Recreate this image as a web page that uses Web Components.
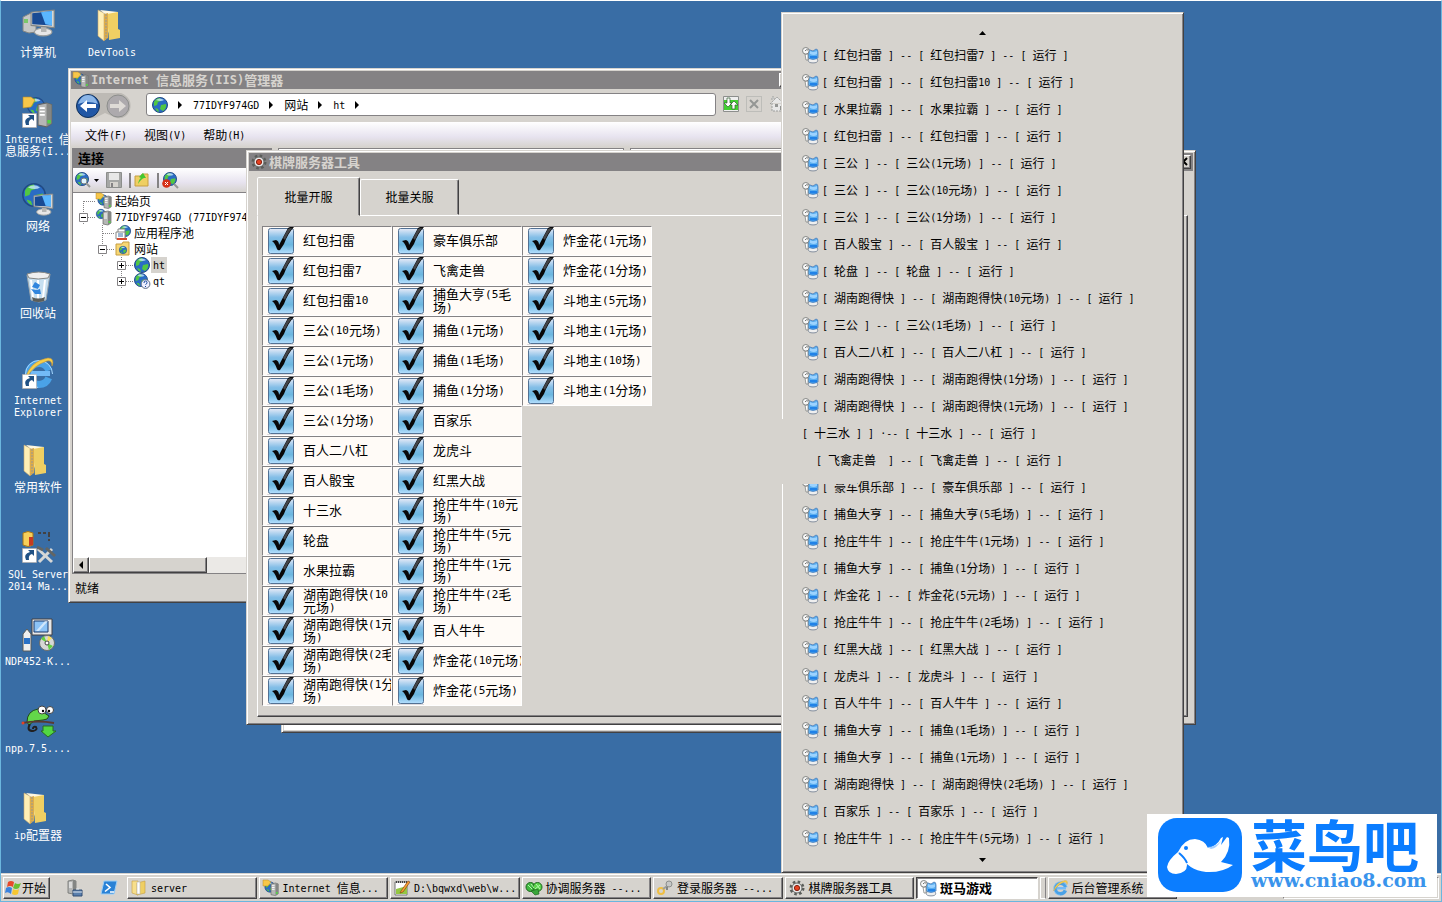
<!DOCTYPE html>
<html lang="zh-CN">
<head>
<meta charset="utf-8">
<title>Desktop</title>
<style>
  html, body {
    height: 100%;
    margin: 0;
    overflow: hidden;
  }
</style>
</head>
<body>
<lp-desktop></lp-desktop>

<script>
// Half-width characters are set smaller, so two of them take one full-width cell.
const t = text => text.replace(/[\x20-\x7e·]+/g, run => `<span class="en">${run}</span>`)

const base = `
  <style>
    :host {
      --face: #d6d3ce;
      --shade: #848284;
      --dark: #424142;
      box-sizing: border-box;
      font: 12px/12px 'Noto Sans CJK SC', sans-serif;
      color: #000;
    }
    *, ::before, ::after { box-sizing: border-box; }
    .en {
      font-family: 'DejaVu Sans Mono', monospace;
      font-size: 10px;
      line-height: 0;
      vertical-align: 1px;
      white-space: pre-wrap;
    }
    button {
      margin: 0;
      padding: 0;
      border: 0;
      background: none;
      font: inherit;
      color: inherit;
    }
    ul { margin: 0; padding: 0; list-style: none; }
    .raised {
      border: 1px solid;
      border-color: #fff var(--dark) var(--dark) #fff;
      box-shadow: inset -1px -1px var(--shade);
      background: var(--face);
    }
  </style>
`

const globe = (x, y, r) => `
  <g transform="translate(${x} ${y}) scale(${r / 8})">
    <circle r="7.5" fill="#2a6cc4" stroke="#214a84" />
    <path d="M-6-3q2-4 6-4l1 3-3 1-1 3-3 1zM1 0l5-1q1 4-3 7l-3-2zM-5 3l3 1 1 3q-3-1-4-4z" fill="#52c742" />
    <path d="M-4-5q4-3 8 0-3 2-8 0z" fill="#c6e7ff" opacity=".8" />
  </g>`
const server = (x, y, s) => `
  <g transform="translate(${x} ${y}) scale(${s})">
    <path d="M0 1l5-1 3 1v11l-3 2-5-1z" fill="#b5b6b5" stroke="#636563" stroke-width=".7" />
    <path d="M5 0v14l3-2V1z" fill="#848684" />
    <path d="M1 3h3M1 5h3M1 7h3" stroke="#fff" />
    <path d="M5.500 10h2v2h-2z" fill="#52d742" />
  </g>`
const shortcut = `
  <path d="M.5 17.500h14v14H.500z" fill="#fff" stroke="#b5a69c" stroke-dasharray="1 1" />
  <path d="M4 29q-3-6 4-8l-2-2h6v6l-2-2q-4 1-3 6z" fill="#215184" />`
const folder = `
  <path d="M2 1l6 3v28l-6-5z" fill="#ffefb5" stroke="#c6a66b" stroke-width=".6" />
  <path d="M4 1l18 2v18l-9 1-4 9V5z" fill="#fff7de" />
  <path d="M11 5l11-2v17l2 1v8l-11 2z" fill="#efcf63" />
  <path d="M8 5l4-1v25l-4 3z" fill="#dead4a" />
  <path d="M10 5v25" stroke="#949694" stroke-dasharray="2 1" />`
const gear = `
  <circle cx="8" cy="8" r="6" fill="none" stroke="#5a5d5a" stroke-width="3" stroke-dasharray="2.400 2.300" />
  <circle cx="8" cy="8" r="5" fill="#e7e7e7" stroke="#636563" />
  <circle cx="8" cy="8" r="2.600" fill="#e74121" stroke="#842010" />`
const ie = `
  <circle cx="17" cy="17" r="10.500" fill="none" stroke="#4aa2e7" stroke-width="7" stroke-dasharray="58 8" stroke-dashoffset="-4" />
  <path d="M9 14h19v5H9z" fill="#73baf7" />
  <circle cx="17" cy="17" r="13.500" fill="none" stroke="#a5d7ff" stroke-width="1" stroke-dasharray="64 22" stroke-dashoffset="-22" />
  <path d="M3 22Q8 4 26 1q7 0 4 8 0-6-5-5Q12 8 5 20z" fill="#f7cf4a" stroke="#c6963a" stroke-width=".6" />`
const monitor = (x, y, s) => `
  <g transform="translate(${x} ${y}) scale(${s})">
    <ellipse cx="12" cy="20" rx="8" ry="3.500" fill="#e7e7e7" stroke="#9c9e9c" />
    <path d="M10 15h5v5h-5z" fill="#b5b6b5" />
    <path d="M1 2l21-2v16l-21-2z" fill="#d6d7d6" stroke="#848684" />
    <path d="M2 3l18-2v13L2 13z" fill="#184a94" />
    <path d="M10 2l10-1v13l-6-1z" fill="#5ab6ff" />
  </g>`

const icons = {
  computer: [32, `<path d="M1 8l8-4 5 2v17l-7 1-6-2z" fill="#c6c7c6" stroke="#848684" /><path d="M2 10h4v4H2z" fill="#7bc76b" />${monitor(8, 1, 1.1)}`],
  iisApp: [32, `${globe(14, 10, 9)}${server(16, 7, 1.7)}<path d="M1 1h8l4 3-4 7-8 1z" fill="#f7c74a" stroke="#b58a29" stroke-width=".6" />${shortcut}`],
  network: [32, `${globe(12, 12, 12)}${monitor(11, 11, .9)}`],
  bin: [32, `<path d="M5 5l23-1-4 26-7 2-8-2z" fill="#c6dff0" stroke="#9ca6ad" />
    <path d="M5 4q12-4 23 0l-2 4q-10 2-19 0z" fill="#efefef" stroke="#848684" />
    <path d="M9 10l2 18M23 10l-2 18M16 10v20" stroke="#fff" stroke-width="2" />
    <path d="M13 12l5 3-2 4-6-2zM9 19l4 5h6l-1-5-4 1z" fill="#3186de" /><path d="M10 27q6 3 13 0l-1 4q-6 2-11 0z" fill="#5a5d5a" />`],
  ie: [32, ie],
  ieLink: [32, ie + shortcut],
  folder: [32, folder],
  sql: [32, `<path d="M1 2q5-3 10 0v12q-5 3-10 0z" fill="#f7cf5a" stroke="#a57518" /><path d="M7 6h4v8l-4 1z" fill="#c63a21" />
    <path d="M16 2h12M27 3v7" stroke="#424142" stroke-dasharray="3 2" stroke-width="2" />
    <path d="M16 18l14 13M30 18L17 31" stroke="#d6d7d6" stroke-width="3" /><path d="M15 16l6 3M24 17l9 8" stroke="#636563" stroke-width="3" />${shortcut}`],
  setup: [32, `<path d="M10 1h20v16H10z" fill="#e7e7e7" stroke="#424142" /><path d="M12 3h14v11H12z" fill="#8cc3f7" stroke="#18396b" /><path d="M14 13L23 3h3L17 13z" fill="#fff" opacity=".6" />
    <path d="M1 16l4-5 4 5v17H1z" fill="#efefef" stroke="#5a5d5a" /><path d="M2 20h6v6H2z" fill="#2971c6" />
    <circle cx="25" cy="25" r="7.500" fill="#d6d7d6" stroke="#6b6d6b" /><path d="M25 25l-6-4 3-3zM25 25l6 3-4 4z" fill="#63cf42" /><path d="M25 25l1-7 4 2z" fill="#f7df5a" /><circle cx="25" cy="25" r="2" fill="#fff" stroke="#424142" />`],
  npp: [32, `<path d="M5 17Q5 6 16 4l11 7q-1 4-6 4l-9 1-5 4z" fill="#63d74a" stroke="#214a18" />
    <path d="M0 18q16-3 32 0" fill="none" stroke="#5a3931" stroke-width="2" /><circle cx="1" cy="18" r="1.500" fill="#e74121" />
    <path d="M8 19q-4 7 3 7 5-1 3-4-3-1-3 2" fill="none" stroke="#212021" stroke-width="2" />
    <circle cx="20" cy="5" r="4" fill="#fff" stroke="#424142" /><circle cx="28" cy="5" r="3.500" fill="#fff" stroke="#424142" /><circle cx="21" cy="6" r="1.200" /><circle cx="27" cy="6" r="1.200" />
    <path d="M21 21h10v5h3l-8 6-7-6h2z" fill="#52d742" stroke="#296b21" />`],
  iis: [16, `${globe(7, 7, 5.5)}<path d="M0 0h5l3 2-3 4-5 0z" fill="#f7c74a" stroke="#b58a29" stroke-width=".5" />${server(8, 3, .9)}`],
  serverGlobe: [16, `${globe(5, 5, 5)}${server(7, 2, 1)}`],
  globe: [16, globe(8, 8, 8)],
  globeFind: [16, `${globe(7, 7, 7)}<circle cx="9" cy="9" r="3" fill="#dff3ff" stroke="#73797b" /><path d="M11 11l4 4" stroke="#949694" stroke-width="2" />`],
  globeStop: [16, `${globe(8, 7, 7)}<path d="M12 12l4 4" stroke="#949694" stroke-width="2" /><circle cx="4.500" cy="11.500" r="4.300" fill="#d63018" /><path d="M3 10l3 3M6 10l-3 3" stroke="#fff" />`],
  globeHelp: [16, `${globe(7, 7, 7)}<circle cx="11.500" cy="11" r="4.400" fill="#efefff" stroke="#5a6984" /><path d="M10 10q0-2 1.500-2t1.500 1.500-1.500 2M11.500 13v1" fill="none" stroke="#10459c" />`],
  save: [16, `<path d="M.5.500h15v15H.500z" fill="#a5a6a5" stroke="#8c8e8c" /><path d="M3 1h10v7H3z" fill="#e7e7e7" /><path d="M4 10h8v5H4z" fill="#d6d3ce" /><path d="M5 11h2v4H5z" fill="#848284" />`],
  folderUp: [16, `<path d="M1 4h6l1-2h6v12H1z" fill="#efcf63" stroke="#c69e42" /><path d="M4 12q1-5 3-6L5 5l4-4 3 5h-2q-3 1-6 6z" fill="#42c731" />`],
  pool: [16, `${globe(10, 6, 6)}<path d="M3 4h7v9H3z" fill="#fff" stroke="#848684" /><path d="M1 7h9v7H1z" fill="#fff" stroke="#848684" /><path d="M2 13h10v2H2z" fill="#d64931" /><path d="M3 9h5M3 11h5" stroke="#3a6ea5" />`],
  siteFolder: [16, `<path d="M1 3h6l1-2h6v13H1z" fill="#f7d773" stroke="#c69e42" />${globe(8, 9, 4)}`],
  gear: [16, gear],
  refresh: [16, `<path d="M.5.500h15v15H.500z" fill="#efefef" stroke="#8c8e8c" /><path d="M1 4h14v10H1z" fill="#42cf31" /><path d="M7 2H4v5H1l4 4 4-4H7zM9 13h3V9h3l-4-4-4 4h2z" fill="#fff" stroke="#315d31" stroke-width=".7" />`],
  stop: [16, `<path d="M.5.500h15v15H.500z" fill="none" stroke="#a5a6a5" stroke-dasharray="1 1" /><path d="M4 4l8 8M12 4l-8 8" stroke="#949694" stroke-width="2" />`],
  home: [16, `<path d="M1 8l7-7 7 7M3 7v8h11V7M3 4V1h2v2" fill="#e7e7e7" stroke="#9c9e9c" stroke-dasharray="2 1" /><path d="M6 8h3v3H6zM11 10h2v4h-2z" fill="#949694" />`],
  flag: [16, `<path d="M3 2q3-2 6 0L8 7Q5 5 2 7z" fill="#e7492a" /><path d="M10 3q3 2 6 0l-2 5q-3 2-6 0z" fill="#6bbf31" /><path d="M1 8q3-2 6 0l-1 6q-3-3-6-1z" fill="#3a82de" /><path d="M8 9q3 2 6 0l-1 5q-3 2-6 0z" fill="#f7c731" />`],
  tools: [16, `${server(1, 0, 1)}<path d="M6 10h9v6H6z" fill="#5a7fad" stroke="#314d73" /><path d="M9 9h3M6 12h9" stroke="#dfe7ef" />`],
  shell: [16, `<path d="M3 1h13l-3 13H0z" fill="#2982d6" stroke="#9ccff7" /><path d="M5 4l4 3.500-5 4M9 12h4" fill="none" stroke="#fff" stroke-width="1.600" />`],
  zip: [16, `<path d="M1 1h6v14l-6-2z" fill="#f7df8c" stroke="#c69e42" stroke-width=".6" /><path d="M6 3l8-2v12l-8 2z" fill="#efcf63" stroke="#c69e42" stroke-width=".6" /><path d="M6 2h3v12H6z" fill="#fff" stroke="#b5b6b5" stroke-width=".6" />`],
  notes: [16, `<path d="M1 2h12v13H1z" fill="#fff" stroke="#737573" /><path d="M2 9l11-3v8H2z" fill="#94c742" /><path d="M2 2h11" stroke="#424142" stroke-dasharray="1 1" stroke-width="2" /><path d="M7 11l7-10 2 1-7 10-3 1z" fill="#f79e31" stroke="#7b3910" stroke-width=".6" />`],
  sync: [16, `<circle cx="4.500" cy="7" r="4.500" fill="#42ba42" stroke="#1f651f" /><circle cx="11.500" cy="7" r="4.500" fill="#5ad34a" stroke="#1f651f" /><path d="M2 5l4 4M5 4l3 4M10 4l4 5M9 9l5-4" stroke="#b5f7ad" /><path d="M5 11l7-2 1 5-4 1z" fill="#3aa63a" stroke="#1f651f" stroke-width=".7" />`],
  key: [16, `<circle cx="4" cy="11" r="3" fill="none" stroke="#efbe42" stroke-width="2" /><path d="M6 9l7-5" stroke="#9c9e9c" stroke-width="2" /><circle cx="12" cy="4" r="3" fill="#c6c7c6" stroke="#8c8e8c" /><path d="M10 7v3" stroke="#848684" stroke-width="2" />`],
  users: [16, `<ellipse cx="11" cy="13.500" rx="4.700" ry="2.400" fill="#efefef" stroke="#6b798c" stroke-width=".8" />
    <path d="M6 4q0-2 2-1l3 1 3-2q2 0 2 3v6q-5 3-10 0z" fill="#5aaef0" stroke="#527db5" stroke-width=".8" />
    <path d="M8 4q3 2 7 0v3q-3 2-7 0z" fill="#9cd3ff" /><path d="M8 9h7v2q-3 1-7 0z" fill="#2182e7" />
    <path d="M3 7h3v6H4z" fill="#fff" stroke="#848684" stroke-width=".8" />
    <circle cx="3.800" cy="3.800" r="3.300" fill="#f7f7f7" stroke="#848684" /><path d="M3 4q1-2 3-1" fill="none" stroke="#737573" />`],
  tick: [28, `<defs><linearGradient id="g" x2="0" y2="1"><stop stop-color="#e7ebf7" /><stop offset=".35" stop-color="#84bee7" /><stop offset=".65" stop-color="#6bb6de" /><stop offset="1" stop-color="#b5dfff" /></linearGradient></defs>
    <path d="M0 27.500h27" stroke="#dedbde" /><rect x="1.500" y="1.500" width="25" height="25" rx="2" fill="url(#g)" stroke="#527194" />
    <path d="M5 14l4-1q3 1 3 5L21 1q3-2 6-1-6 6-10 17l-4 6q-2 1-3-1-2-6-5-8z" fill="#080808" /><path d="M21 2q2-1 4-1-4 5-7 12l-2-2z" fill="#42454a" />`],
  dove: [84, `<rect width="84" height="74" rx="19" fill="#0b7dff" />
    <path d="M20 34q6-13 17-13 10 1 13 9 9-2 13-10l2-1-2 8 6-8 2 1q2 14-8 24l12 3q-11 8-27 7-18-2-26-17z" fill="#fff" />
    <path d="M49 29q9 0 14-6-4 7-10 8z" fill="#a5cfff" /><circle cx="28" cy="30" r="2" fill="#0b7dff" />
    <path d="M20 34q-10 8-11 15 1 7 9 7 11-1 11-9 0-6-7-11z" fill="#fff" /><path d="M21 35q6 5 8 10" fill="none" stroke="#0b7dff" stroke-width="2" />`],
}

class Icon extends HTMLElement {
  constructor() {
    super()
    this.attachShadow({ mode: 'open' })
  }

  connectedCallback() {
    const [size, shapes] = icons[this.getAttribute('name')]
    const width = this.getAttribute('size') || size
    this.shadowRoot.innerHTML = `
      <style>
        :host { display: block; flex: none; }
        svg { display: block; overflow: visible; }
      </style>
      <svg width="${width}" height="${width}" viewBox="0 0 ${size} ${size}" aria-hidden="true">${shapes}</svg>
    `
  }
}
customElements.define('lp-icon', Icon)

class Shortcut extends HTMLElement {
  constructor() {
    super()
    this.attachShadow({ mode: 'open' })
  }

  connectedCallback() {
    this.shadowRoot.innerHTML = `
      ${base}
      <style>
        :host { display: block; }
        a {
          display: flex;
          flex-direction: column;
          align-items: center;
          gap: 5px;
          color: #fff;
          text-align: center;
          text-decoration: none;
        }
        span.label { width: 68px; }
      </style>
      <a href="#"><lp-icon name="${this.getAttribute('icon')}"></lp-icon><span class="label">${t(this.getAttribute('label'))}</span></a>
    `
  }
}
customElements.define('lp-shortcut', Shortcut)

class AppWindow extends HTMLElement {
  constructor() {
    super()
    this.attachShadow({ mode: 'open' })
  }

  connectedCallback() {
    const icon = this.getAttribute('icon')
    this.shadowRoot.innerHTML = `
      ${base}
      <style>
        :host {
          display: flex;
          flex-direction: column;
          padding: 2px;
          border: 1px solid;
          border-color: var(--face) var(--dark) var(--dark) var(--face);
          box-shadow: inset 1px 1px #fff, inset -1px -1px var(--shade);
          background: var(--face);
        }
        header {
          display: flex;
          align-items: center;
          flex: none;
          gap: 2px;
          height: 18px;
          padding: 0 2px;
          background: var(--shade);
          color: var(--face);
          font-size: 13px;
          font-weight: bold;
        }
        header .en { font-size: 12px; }
        button {
          width: 14px;
          height: 14px;
          margin-left: auto;
          color: #000;
        }
        button svg { display: block; }
        ::slotted(*) { flex: 1; min-height: 0; }
      </style>
      ${icon ? `<header>
        <lp-icon name="${icon}"></lp-icon>
        <span>${t(this.getAttribute('caption'))}</span>
        <button class="raised" aria-label="关闭"><svg width="12" height="12"><path d="M2 2l7 7M9 2l-7 7" stroke="#000" stroke-width="2" /></svg></button>
      </header>` : ''}
      <slot></slot>
    `
  }
}
customElements.define('lp-window', AppWindow)

class SiteManager extends HTMLElement {
  constructor() {
    super()
    this.attachShadow({ mode: 'open' })
    const row = (level, mark, icon, label, selected) => `
      <li style="--level: ${level}">
        <span class="twist">${mark ? `<svg width="9" height="9"><path d="M.5.500h8v8h-8z" fill="#fff" stroke="#848284" /><path d="${mark === '+' ? 'M2 4.500h5M4.500 2v5' : 'M2 4.500h5'}" stroke="#000" /></svg>` : ''}</span>
        <lp-icon name="${icon}"></lp-icon>
        <span class="name${selected ? ' selected' : ''}">${t(label)}</span>
      </li>`
    const arrow = '<svg width="5" height="8"><path d="M0 0l4 4-4 4z" /></svg>'
    this.shadowRoot.innerHTML = `
      ${base}
      <style>
        :host { display: flex; flex-direction: column; }
        .nav {
          display: flex;
          align-items: center;
          flex: none;
          gap: 7px;
          height: 33px;
          padding: 0 4px;
        }
        .nav > svg { flex: none; }
        .nav button { margin-bottom: 4px; }
        .address {
          display: flex;
          align-items: center;
          flex: 0 0 570px;
          gap: 10px;
          height: 23px;
          margin: 0 0 2px 6px;
          padding-left: 5px;
          border: 1px solid var(--shade);
          border-radius: 3px;
          background: #fff;
        }
        .menu, .tools {
          display: flex;
          align-items: center;
          flex: none;
          background: linear-gradient(#fff, #e7e3ef 60%, var(--face));
        }
        .menu { gap: 17px; height: 25px; padding-left: 14px; }
        .panes { display: flex; flex: 1; gap: 6px; min-height: 0; padding: 1px 1px 0; }
        .pane { border: 1px solid var(--shade); background: #fff; }
        .pane.mid { width: 346px; }
        .pane.end { flex: 1; }
        .side {
          display: flex;
          flex-direction: column;
          width: 200px;
          border-left: 1px solid var(--shade);
          border-bottom: 1px solid var(--shade);
          background: #fff;
        }
        h2 {
          flex: none;
          margin: 0;
          padding: 3px 5px;
          background: var(--shade);
          font-size: 13px;
          line-height: 14px;
        }
        .tools { gap: 7px; height: 25px; padding: 0 2px; border-bottom: 1px solid var(--shade); }
        .find { display: flex; align-items: center; gap: 3px; }
        .bar { width: 2px; height: 15px; background: var(--shade); }
        .tools .bar + button { margin-left: -4px; }
        ul { flex: 1; padding-left: 6px; }
        li {
          display: flex;
          align-items: center;
          height: 16px;
          padding-left: calc(var(--level) * 19px);
          white-space: nowrap;
        }
        .twist {
          display: flex;
          align-items: center;
          align-self: stretch;
          width: 17px;
          background:
            repeating-linear-gradient(90deg, var(--shade) 0 1px, transparent 1px 2px) 5px 8px / 12px 1px no-repeat,
            repeating-linear-gradient(var(--shade) 0 1px, transparent 1px 2px) 4px 0 / 1px 16px no-repeat;
        }
        li:first-child .twist { background-position: 5px 8px, 4px 8px; }
        .name { margin-left: 1px; padding: 2px; }
        .selected { background: var(--face); }
        .scroll { display: flex; flex: none; height: 16px; background: #ebe9e6; }
        .scroll button { display: grid; place-items: center; width: 16px; }
        .thumb { width: 118px; }
        footer { flex: none; padding: 8px 4px 6px; }
      </style>
      <div class="nav">
        <svg width="58" height="28" viewBox="0 0 58 28">
          <path d="M14 1h32q12 5 9 17-4 10-14 8L30 21 20 26Q4 28 1 16 1 5 14 1z" fill="#bdbab5" />
          <circle cx="13" cy="14" r="11.500" fill="#2157a5" stroke="#10315a" /><path d="M3 12q3-9 10-9t10 9q-10-4-20 0z" fill="#8cb6e7" />
          <path d="M5 14l7-6v4h9v4h-9v4z" fill="#fff" />
          <circle cx="43" cy="14" r="11" fill="#adaaad" stroke="#8c8e8c" /><path d="M51 14l-7-6v4h-9v4h9v4z" fill="#dedbd6" />
        </svg>
        <div class="address"><lp-icon name="globe"></lp-icon>${arrow}<span>${t('77IDYF974GD')}</span>${arrow}<span>网站</span>${arrow}<span>${t('ht')}</span>${arrow}</div>
        <button aria-label="刷新"><lp-icon name="refresh"></lp-icon></button>
        <button aria-label="停止"><lp-icon name="stop"></lp-icon></button>
        <button aria-label="主页"><lp-icon name="home"></lp-icon></button>
      </div>
      <div class="menu">
        <button>${t('文件(F)')}</button><button>${t('视图(V)')}</button><button>${t('帮助(H)')}</button>
      </div>
      <div class="panes">
        <div class="side">
          <h2>连接</h2>
          <div class="tools">
            <button class="find" aria-label="连接"><lp-icon name="globeFind"></lp-icon><svg width="5" height="3"><path d="M0 0h5L2.500 3z" /></svg></button>
            <button aria-label="保存"><lp-icon name="save"></lp-icon></button>
            <span class="bar"></span>
            <button aria-label="向上"><lp-icon name="folderUp"></lp-icon></button>
            <span class="bar"></span>
            <button aria-label="断开"><lp-icon name="globeStop"></lp-icon></button>
          </div>
          <ul>
            ${row(0, '', 'iis', '起始页')}
            ${row(0, '-', 'serverGlobe', '77IDYF974GD (77IDYF974GD')}
            ${row(1, '', 'pool', '应用程序池')}
            ${row(1, '-', 'siteFolder', '网站')}
            ${row(2, '+', 'globe', 'ht', true)}
            ${row(2, '+', 'globeHelp', 'qt')}
          </ul>
          <div class="scroll">
            <button class="raised" aria-label="向左"><svg width="4" height="8"><path d="M4 0v8L0 4z" /></svg></button>
            <div class="thumb raised"></div>
          </div>
        </div>
        <div class="pane mid"></div>
        <div class="pane end"></div>
      </div>
      <footer>就绪</footer>
    `
  }
}
customElements.define('lp-site-manager', SiteManager)

const rooms = [
  '红包扫雷', '红包扫雷7', '红包扫雷10', '三公(10元场)', '三公(1元场)', '三公(1毛场)', '三公(1分场)', '百人二八杠',
  '百人骰宝', '十三水', '轮盘', '水果拉霸', '湖南跑得快(10元场)', '湖南跑得快(1元场)', '湖南跑得快(2毛场)', '湖南跑得快(1分场)',
  '豪车俱乐部', '飞禽走兽', '捕鱼大亨(5毛场)', '捕鱼(1元场)', '捕鱼(1毛场)', '捕鱼(1分场)', '百家乐', '龙虎斗',
  '红黑大战', '抢庄牛牛(10元场)', '抢庄牛牛(5元场)', '抢庄牛牛(1元场)', '抢庄牛牛(2毛场)', '百人牛牛', '炸金花(10元场)', '炸金花(5元场)',
  '炸金花(1元场)', '炸金花(1分场)', '斗地主(5元场)', '斗地主(1元场)', '斗地主(10场)', '斗地主(1分场)',
]

class ServerTool extends HTMLElement {
  constructor() {
    super()
    this.attachShadow({ mode: 'open' })
    this.shadowRoot.innerHTML = `
      ${base}
      <style>
        :host { display: flex; flex-direction: column; padding: 6px 5px 5px 8px; }
        .tabs { display: flex; align-items: flex-end; flex: none; }
        .tabs button {
          width: 99px;
          height: 36px;
          border: 1px solid;
          border-color: #fff var(--dark) transparent #fff;
          border-radius: 2px 2px 0 0;
          box-shadow: inset -1px 0 var(--shade);
        }
        .tabs button[aria-selected=true] {
          width: 103px;
          height: 39px;
          margin-bottom: -1px;
          z-index: 1;
          background: var(--face);
        }
        .panel {
          flex: 1;
          padding: 10px 4px;
          border: 1px solid;
          border-color: #fff var(--dark) var(--dark) #fff;
          box-shadow: inset -1px -1px var(--shade);
        }
        .rooms {
          display: grid;
          grid-template-rows: repeat(16, 30px);
          grid-auto-columns: 130px;
          grid-auto-flow: column;
          font-size: 13px;
          line-height: 13px;
        }
        .rooms .en { font-size: 11px; }
        label {
          display: flex;
          align-items: center;
          gap: 7px;
          padding-left: 4px;
          border: 1px solid;
          border-color: var(--shade) #fff #fff var(--shade);
          background: #fffbf7;
          overflow: hidden;
        }
        .box { display: grid; flex: none; width: 29px; height: 28px; }
        .box > * { grid-area: 1 / 1; }
        input { width: 26px; height: 26px; margin: 1px; appearance: none; }
        .text { flex: none; width: 93px; padding-bottom: 3px; }
      </style>
      <div class="tabs" role="tablist">
        <button role="tab" aria-selected="true">批量开服</button>
        <button role="tab" aria-selected="false">批量关服</button>
      </div>
      <div class="panel">
        <div class="rooms">
          ${rooms.map((name, i) => `<label for="room${i}"><span class="box"><lp-icon name="tick"></lp-icon><input type="checkbox" id="room${i}" checked></span><span class="text">${t(name)}</span></label>`).join('')}
        </div>
      </div>
    `
  }
}
customElements.define('lp-server-tool', ServerTool)

const servers = [
  ['红包扫雷', '红包扫雷7'], ['红包扫雷', '红包扫雷10'], ['水果拉霸', '水果拉霸'], ['红包扫雷', '红包扫雷'],
  ['三公', '三公(1元场)'], ['三公', '三公(10元场)'], ['三公', '三公(1分场)'], ['百人骰宝', '百人骰宝'],
  ['轮盘', '轮盘'], ['湖南跑得快', '湖南跑得快(10元场)'], ['三公', '三公(1毛场)'], ['百人二八杠', '百人二八杠'],
  ['湖南跑得快', '湖南跑得快(1分场)'], ['湖南跑得快', '湖南跑得快(1元场)'], ['十三水', '十三水', 'shifted'],
  ['飞禽走兽', '飞禽走兽', 'bare'], ['豪车俱乐部', '豪车俱乐部', 'torn'], ['捕鱼大亨', '捕鱼大亨(5毛场)'],
  ['抢庄牛牛', '抢庄牛牛(1元场)'], ['捕鱼大亨', '捕鱼(1分场)'], ['炸金花', '炸金花(5元场)'], ['抢庄牛牛', '抢庄牛牛(2毛场)'],
  ['红黑大战', '红黑大战'], ['龙虎斗', '龙虎斗'], ['百人牛牛', '百人牛牛'], ['捕鱼大亨', '捕鱼(1毛场)'],
  ['捕鱼大亨', '捕鱼(1元场)'], ['湖南跑得快', '湖南跑得快(2毛场)'], ['百家乐', '百家乐'], ['抢庄牛牛', '抢庄牛牛(5元场)'],
]

class GroupMenu extends HTMLElement {
  constructor() {
    super()
    this.attachShadow({ mode: 'open' })
    const item = ([group, name, state = '']) => {
      const head = { shifted: `[ ${group} ] ] ·`, bare: `[ ${group}  ] ` }[state] || `[ ${group} ] `
      const icon = state === 'shifted' || state === 'bare' ? '' : '<lp-icon name="users"></lp-icon>'
      return `<li class="${state}"><button>${icon}<span>${t(`${head}-- [ ${name} ] -- [ 运行 ]`)}</span></button></li>`
    }
    this.shadowRoot.innerHTML = `
      ${base}
      <style>
        :host {
          display: block;
          border: 1px solid;
          border-color: var(--face) var(--dark) var(--dark) var(--face);
          box-shadow: inset 1px 1px #fff, inset -1px -1px var(--shade);
          background: var(--face);
        }
        .more { display: grid; place-items: center; width: 100%; height: 21px; padding-bottom: 3px; }
        .more.up { height: 28px; padding: 12px 0 0; }
        li { position: relative; }
        li button {
          display: flex;
          align-items: center;
          gap: 4px;
          width: 100%;
          height: 27px;
          padding-left: 20px;
          white-space: nowrap;
        }
        .bare button { padding-left: 34px; }
        /* leftover of an unfinished repaint */
        .shifted::before, .bare::before, .torn::before {
          content: '';
          position: absolute;
          left: 0;
          width: 3px;
          height: 27px;
          background: var(--face);
        }
        .torn::before { width: 75px; height: 11px; }
      </style>
      <button class="more up" aria-label="向上滚动"><svg width="7" height="4"><path d="M3.500 0L7 4H0z" /></svg></button>
      <ul>${servers.map(item).join('')}</ul>
      <button class="more" aria-label="向下滚动"><svg width="7" height="4"><path d="M0 0h7L3.500 4z" /></svg></button>
    `
  }
}
customElements.define('lp-group-menu', GroupMenu)

const tasks = [
  ['zip', 'server'], ['iis', 'Internet 信息...'], ['notes', 'D:\\bqwxd\\web\\w...'], ['sync', '协调服务器 --...'],
  ['key', '登录服务器 --...'], ['gear', '棋牌服务器工具'], ['users', '斑马游戏', 'active'], ['ie', '后台管理系统'],
]

class Taskbar extends HTMLElement {
  constructor() {
    super()
    this.attachShadow({ mode: 'open' })
    this.shadowRoot.innerHTML = `
      ${base}
      <style>
        :host {
          display: flex;
          align-items: center;
          gap: 2px;
          height: 28px;
          padding: 3px 2px 2px;
          border-top: 1px solid var(--face);
          box-shadow: inset 0 1px #fff;
          background: var(--face);
        }
        button { display: flex; align-items: center; flex: none; height: 22px; }
        .start { gap: 1px; width: 47px; padding-left: 1px; }
        .quick { display: flex; gap: 18px; padding: 0 8px 0 15px; }
        .tasks { display: flex; gap: 2px; flex: 0 1 1050px; min-width: 0; }
        .tasks li { display: flex; gap: 2px; flex: 1 1 0; min-width: 0; }
        .task { gap: 4px; flex: 1; min-width: 0; padding-left: 3px; white-space: nowrap; overflow: hidden; }
        .active {
          border-color: var(--dark) #fff #fff var(--dark);
          box-shadow: inset 1px 1px var(--shade);
          background: #fff;
          font-size: 13px;
          font-weight: bold;
        }
        .grip { width: 6px; height: 22px; border: 1px solid #fff; border-right-color: var(--shade); }
        .tray { align-self: stretch; width: 156px; margin-left: auto; border: 1px solid; border-color: var(--shade) #fff #fff var(--shade); }
      </style>
      <button class="start raised"><lp-icon name="flag"></lp-icon>开始</button>
      <div class="quick">
        <button aria-label="服务器管理器"><lp-icon name="tools"></lp-icon></button>
        <button aria-label="命令行"><lp-icon name="shell"></lp-icon></button>
      </div>
      <ul class="tasks">
        ${tasks.map(([icon, label, state = '']) => `<li><button class="task raised ${state}"><lp-icon name="${icon}" size="16"></lp-icon><span>${t(label)}</span></button>${state ? '<span class="grip"></span>' : ''}</li>`).join('')}
      </ul>
      <div class="tray"></div>
    `
  }
}
customElements.define('lp-taskbar', Taskbar)

class Banner extends HTMLElement {
  constructor() {
    super()
    this.attachShadow({ mode: 'open' })
    this.shadowRoot.innerHTML = `
      ${base}
      <style>
        :host {
          display: flex;
          gap: 9px;
          width: 290px;
          height: 83px;
          padding: 4px 0 0 11px;
          background: #fff;
          color: #0b7dff;
        }
        strong { display: block; font-size: 56px; line-height: 50px; white-space: nowrap; }
        a {
          display: block;
          color: #3a94ec;
          font: bold 19px/24px 'DejaVu Serif', serif;
          text-decoration: none;
        }
      </style>
      <lp-icon name="dove"></lp-icon>
      <div><strong>菜鸟吧</strong><a href="#">www.cniao8.com</a></div>
    `
  }
}
customElements.define('lp-banner', Banner)

class Desktop extends HTMLElement {
  constructor() {
    super()
    this.attachShadow({ mode: 'open' })
    this.shadowRoot.innerHTML = `
      ${base}
      <style>
        :host {
          display: grid;
          grid-template-rows: 1fr auto;
          position: relative;
          height: 100%;
          border: 1px solid #6bb6de;
          border-top-color: #fff;
          background: #396da5;
          overflow: hidden;
        }
        main { position: relative; min-height: 0; }
        .icons {
          display: grid;
          grid-template-rows: repeat(10, 87px);
          grid-auto-columns: 74px;
          grid-auto-flow: column;
          padding-top: 8px;
        }
        .icons :last-child { grid-area: 1 / 2; }
        lp-window, lp-group-menu, lp-banner { position: absolute; }
        .iis { left: 67px; top: 67px; width: 730px; height: 535px; }
        .back { left: 280px; top: 300px; width: 600px; height: 432px; }
        .back div { background: #fff; }
        .tool { left: 245px; top: 149px; width: 950px; height: 575px; }
        lp-group-menu { left: 780px; bottom: 0; width: 403px; }
        lp-banner { right: 4px; bottom: 4px; }
      </style>
      <main>
        <div class="icons">
          <lp-shortcut icon="computer" label="计算机"></lp-shortcut>
          <lp-shortcut icon="iisApp" label="Internet 信息服务(I..."></lp-shortcut>
          <lp-shortcut icon="network" label="网络"></lp-shortcut>
          <lp-shortcut icon="bin" label="回收站"></lp-shortcut>
          <lp-shortcut icon="ieLink" label="Internet Explorer"></lp-shortcut>
          <lp-shortcut icon="folder" label="常用软件"></lp-shortcut>
          <lp-shortcut icon="sql" label="SQL Server 2014 Ma..."></lp-shortcut>
          <lp-shortcut icon="setup" label="NDP452-K..."></lp-shortcut>
          <lp-shortcut icon="npp" label="npp.7.5...."></lp-shortcut>
          <lp-shortcut icon="folder" label="ip配置器"></lp-shortcut>
          <lp-shortcut icon="folder" label="DevTools"></lp-shortcut>
        </div>
        <lp-window class="back"><div></div></lp-window>
        <lp-window class="iis" icon="iis" caption="Internet 信息服务(IIS)管理器"><lp-site-manager></lp-site-manager></lp-window>
        <lp-window class="tool" icon="gear" caption="棋牌服务器工具"><lp-server-tool></lp-server-tool></lp-window>
        <lp-group-menu></lp-group-menu>
      </main>
      <lp-taskbar></lp-taskbar>
      <lp-banner></lp-banner>
    `
  }
}
customElements.define('lp-desktop', Desktop)
</script>
</body>
</html>
